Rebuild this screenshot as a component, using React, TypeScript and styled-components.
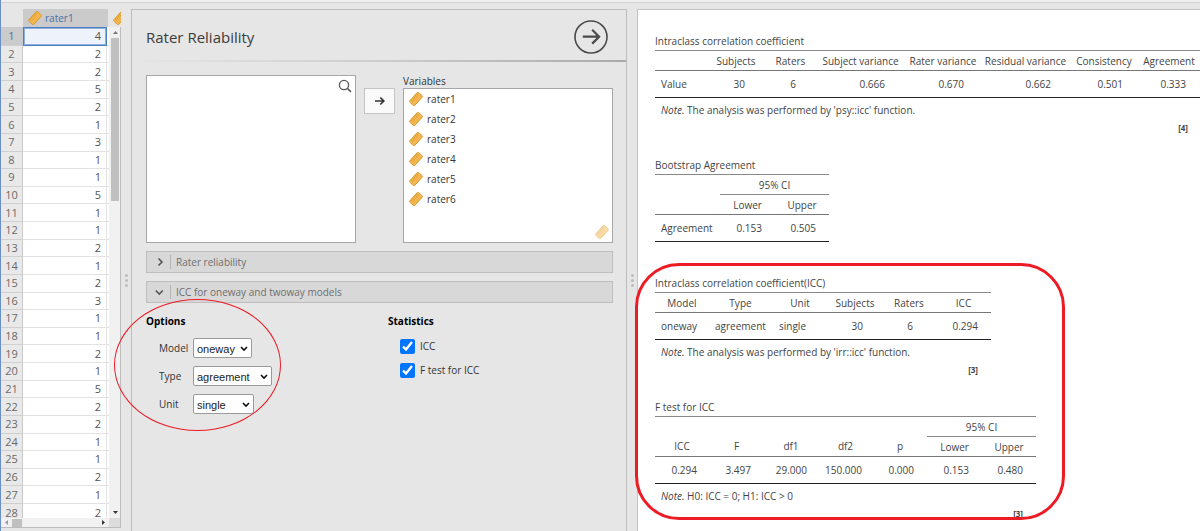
import React from "react";
import styled, { createGlobalStyle } from "styled-components";

const GlobalStyle = createGlobalStyle`
  *, *::before, *::after { box-sizing: border-box; }
  body {
    margin: 0;
    background: #e6e6e6;
    color: #333;
    font-family: "Open Sans", "Noto Sans", sans-serif;
    font-size: 10px;
  }
  button, input, select { margin: 0; font: inherit; color: inherit; }
`;

const Page = styled.div`
  display: flex;
  flex-direction: column;
  height: 100vh;
  overflow: hidden;
  border-left: 1px solid #6a8fc4;
`;

const TopStrip = styled.header`
  flex: none;
  height: 9px;
  border-top: 2px solid #efefef;
  box-shadow: inset 0 1px 0 #d2d2d2;
`;

const Workspace = styled.main`
  flex: 1;
  min-height: 0;
  display: grid;
  grid-template-columns: 120px 10px minmax(0, 496fr) 10px minmax(0, 563fr);
`;

/* ---------- data sheet ---------- */

const Sheet = styled.section`
  display: flex;
  flex-direction: column;
  min-height: 0;
  margin-bottom: 3px;
  border-bottom: 1px solid #bdbdbd;
`;

const SheetHeader = styled.div`
  flex: none;
  display: flex;
  height: 18px;
  padding-left: 22px;
  overflow: hidden;
`;

const ColumnHeader = styled.div<{ $active?: boolean }>`
  flex: none;
  display: flex;
  align-items: center;
  gap: 3px;
  width: 85px;
  padding-left: 5px;
  background: ${(p) => (p.$active ? "#cbcbcb" : "transparent")};
  color: #4a70a8;
`;

const SheetBody = styled.div`
  flex: 1;
  min-height: 0;
  display: grid;
  grid-template-columns: minmax(0, 1fr) 11px;
  grid-template-rows: minmax(0, 1fr) 9px;
  border-right: 1px solid #bdbdbd;
`;

const SheetViewport = styled.div`
  overflow: hidden;
  background: #fff;
`;

const DataTable = styled.table`
  width: 100%;
  height: 495px;
  border-collapse: separate;
  border-spacing: 0;
  table-layout: fixed;
  font-size: 11px;
  line-height: 14px;

  th, td { padding: 0; }
`;

const RowNumber = styled.th<{ $active?: boolean }>`
  width: 22px;
  border-right: 1px solid #c9c9c9;
  border-bottom: 1px solid #d0d0d0;
  background: ${(p) => (p.$active ? "#cbcbcb" : "#e9e9e9")};
  color: ${(p) => (p.$active ? "#4a70a8" : "#6a6a6a")};
  font-weight: 400;
`;

const DataCell = styled.td<{ $active?: boolean }>`
  && { padding-right: 5px; }
  border-right: 1px solid #e2e2e2;
  border-bottom: 1px solid #e2e2e2;
  text-align: right;
  color: #555;
  ${(p) =>
    p.$active &&
    `
    border: 1px solid #4a7fc4;
    box-shadow: inset 0 0 0 1px #8fb0dd;
    background: #edf2fb;
  `}
`;

const NextCell = styled.td`
  width: 2px;
  border-bottom: 1px solid #e2e2e2;
`;

const VerticalBar = styled.div`
  display: flex;
  flex-direction: column;
  align-items: center;
  justify-content: space-between;
  padding: 0 1px 0 2px;
  background: #f1f1f1;
`;

const HorizontalBar = styled.div`
  display: flex;
  align-items: center;
  justify-content: space-between;
  background: #f1f1f1;
`;

const BarStart = styled.div<{ $vertical?: boolean }>`
  display: flex;
  flex-direction: ${(p) => (p.$vertical ? "column" : "row")};
  align-items: center;
`;

const ArrowCell = styled.span`
  display: flex;
  align-items: center;
  justify-content: center;
  width: 11px;
  height: 11px;
`;

const Thumb = styled.span<{ $w: number; $h: number }>`
  width: ${(p) => p.$w}px;
  height: ${(p) => p.$h}px;
  background: #c0c0c0;
`;

const Corner = styled.div`
  background: #dcdcdc;
`;

/* ---------- splitter ---------- */

const Splitter = styled.div`
  display: flex;
  flex-direction: column;
  align-items: center;
  justify-content: center;
  gap: 2px;
  margin-top: 20px;
`;

const Dot = styled.span`
  width: 3px;
  height: 3px;
  border-radius: 50%;
  background: #bcbcbc;
`;

/* ---------- options panel ---------- */

const OptionsPanel = styled.section`
  min-height: 0;
  border: 1px solid #bdbdbd;
  border-bottom: 0;
`;

const PanelHeader = styled.div`
  display: flex;
  align-items: center;
  justify-content: space-between;
  height: 52px;
  padding: 3px 18px 0 14px;
  border-bottom: 2px solid;
  border-image: linear-gradient(to right, #e6e6e6, #cdcdcd 50%, #aaa) 1;
`;

const PanelTitle = styled.h1`
  margin: 0;
  font-size: 15px;
  font-weight: 400;
  line-height: 20px;
  color: #3c3c3c;
`;

const RunButton = styled.button`
  display: flex;
  padding: 0;
  border: 0;
  background: none;
`;

const PanelBody = styled.div`
  padding: 13px 13px 0 14px;
`;

const Picker = styled.div`
  display: grid;
  grid-template-columns: minmax(0, 1fr) 31px minmax(0, 1fr);
  column-gap: 8px;
  height: 168px;
`;

const ListBox = styled.div`
  flex: 1;
  display: flex;
  flex-direction: column;
  justify-content: space-between;
  border: 1px solid #a6a6a6;
  background: #fff;
`;

const SearchRow = styled.div`
  display: flex;
  justify-content: flex-end;
  padding: 3px 3px;
`;

const MoveButton = styled.button`
  display: flex;
  align-items: center;
  justify-content: center;
  height: 26px;
  margin-top: 13px;
  padding: 0;
  border: 1px solid #c4c4c4;
  background: #fafafa;
`;

const Target = styled.div`
  display: flex;
  flex-direction: column;
`;

const TargetLabel = styled.div`
  height: 13px;
  line-height: 12px;
`;

const VariableList = styled.ul`
  margin: 0;
  padding: 0 0 0 5px;
  list-style: none;
`;

const Variable = styled.li`
  display: flex;
  align-items: center;
  gap: 4px;
  height: 20px;
`;

const TypeHint = styled.div`
  display: flex;
  justify-content: flex-end;
  padding: 0 3px 3px 0;
  opacity: 0.5;
`;

const Collapser = styled.button`
  display: flex;
  align-items: center;
  width: 100%;
  height: 22px;
  margin-top: 8px;
  padding: 0 8px;
  border: 1px solid #bebebe;
  background: #d8d8d8;
  color: #6e6e6e;
  text-align: left;
`;

const CollapserIcon = styled.span`
  display: flex;
  width: 16px;
  height: 14px;
  align-items: center;
  border-right: 1px solid #b4b4b4;
  margin-right: 5px;
`;

const Settings = styled.div`
  display: grid;
  grid-template-columns: 242px minmax(0, 1fr);
  margin-top: 10px;
`;

const SettingsGroup = styled.div`
  position: relative;
`;

const GroupTitle = styled.h2`
  margin: 0 0 9px;
  font-size: 10px;
  font-weight: 700;
  line-height: 16px;
  color: #000;
`;

const Field = styled.div`
  display: flex;
  align-items: center;
  height: 20px;
  margin-bottom: 8px;
  padding-left: 13px;
`;

const FieldLabel = styled.label`
  width: 34px;
  white-space: nowrap;
`;

const SelectWrap = styled.span<{ $w: number }>`
  position: relative;
  display: flex;
  width: ${(p) => p.$w}px;
  height: 20px;
`;

const Select = styled.select`
  appearance: none;
  width: 100%;
  padding: 1px 3px 0;
  border: 1px solid #9a9a9a;
  border-radius: 2px;
  background: #fff;
  color: #222;
  font-family: "Liberation Sans", Arial, sans-serif;
  font-size: 11px;
`;

const SelectChevron = styled.svg`
  position: absolute;
  right: 4px;
  top: 8px;
  pointer-events: none;
`;

const Check = styled.label`
  display: flex;
  align-items: center;
  gap: 5px;
  height: 16px;
  margin-bottom: 8px;
  padding-left: 12px;
`;

const CheckInput = styled.input`
  width: 15px;
  height: 15px;
  accent-color: #0075ff;
`;

const EllipseMark = styled.div`
  position: absolute;
  top: -14px;
  left: -32px;
  width: 167px;
  height: 132px;
  border: 1px solid #ed1c24;
  border-radius: 50%;
  pointer-events: none;
`;

/* ---------- results ---------- */

const Results = styled.section`
  padding: 22px 0 0 17px;
  border: 1px solid #c4c4c4;
  border-width: 1px 0 0 1px;
  background: #fff;
  color: #444;
`;

const Result = styled.article`
  width: max-content;
  margin-bottom: 23px;
`;

const MarkedResults = styled.div`
  position: relative;
  width: max-content;
  margin-top: 32px;

  & > article:last-of-type { margin-bottom: 0; }
`;

const FrameMark = styled.div`
  position: absolute;
  inset: -11px -29px -1px -20px;
  border: 3px solid #ed1c24;
  border-radius: 44px;
  pointer-events: none;
`;

const ResultTable = styled.table`
  border-collapse: separate;
  border-spacing: 0;
  table-layout: fixed;
  width: 1px;
  white-space: nowrap;

  caption {
    height: 18px;
    line-height: 18px;
    text-align: left;
  }
`;

const Head = styled.th<{ $line?: boolean }>`
  height: 20px;
  padding: 0;
  border-top: ${(p) => (p.$line ? "1px solid #888" : "0")};
  font-weight: 400;
  text-align: center;
`;

const Value = styled.td<{ $left?: boolean; $inset: number }>`
  height: 28px;
  padding: 0 ${(p) => (p.$left ? 0 : p.$inset)}px 0 ${(p) => (p.$left ? p.$inset : 0)}px;
  border-top: 1px solid #777;
  border-bottom: 1px solid #222;
  text-align: ${(p) => (p.$left ? "left" : "right")};
`;

const Note = styled.p`
  margin: 0;
  padding-left: 6px;
  line-height: 24px;
`;

const Reference = styled.p`
  margin: 0;
  padding-right: 13px;
  font-size: 8px;
  font-weight: 700;
  line-height: 11px;
  text-align: right;
`;

/* ---------- icons ---------- */

const RulerSvg = styled.svg`
  flex: none;
`;

const Ruler = () => (
  <RulerSvg width="14" height="14" viewBox="0 0 14 14" aria-hidden="true">
    <g transform="rotate(-48 7 7)">
      <rect x="0.5" y="3.6" width="13" height="6.8" rx="0.8" fill="#f2b64e" stroke="#de962c" strokeWidth="0.9" />
      <path d="M3 4v2.2M5 4v3M7 4v2.2M9 4v3M11 4v2.2" stroke="#d98f25" strokeWidth="0.7" />
    </g>
  </RulerSvg>
);

const Triangle = ({ d, fill }: { d: string; fill: string }) => (
  <svg width="5" height="5" viewBox="0 0 5 5" aria-hidden="true">
    <path d={d} fill={fill} />
  </svg>
);

/* ---------- data ---------- */

const RATER1 = [4, 2, 2, 5, 2, 1, 3, 1, 1, 5, 1, 1, 2, 1, 2, 3, 1, 1, 2, 1, 5, 2, 2, 1, 1, 2, 1, 2];
const VARIABLES = ["rater1", "rater2", "rater3", "rater4", "rater5", "rater6"];

type Column = { name: string; value: string; width: number; inset: number; left?: boolean };

const ICC_COLUMNS: Column[] = [
  { name: "", value: "Value", width: 51, inset: 6, left: true },
  { name: "Subjects", value: "30", width: 60, inset: 21 },
  { name: "Raters", value: "6", width: 49, inset: 19 },
  { name: "Subject variance", value: "0.666", width: 91, inset: 21 },
  { name: "Rater variance", value: "0.670", width: 74, inset: 16 },
  { name: "Residual variance", value: "0.662", width: 91, inset: 20 },
  { name: "Consistency", value: "0.501", width: 66, inset: 14 },
  { name: "Agreement", value: "0.333", width: 64, inset: 15 },
];

const BOOTSTRAP_COLUMNS: Column[] = [
  { name: "", value: "Agreement", width: 65, inset: 6, left: true },
  { name: "Lower", value: "0.153", width: 55, inset: 13 },
  { name: "Upper", value: "0.505", width: 54, inset: 13 },
];

const MODEL_COLUMNS: Column[] = [
  { name: "Model", value: "oneway", width: 54, inset: 6, left: true },
  { name: "Type", value: "agreement", width: 63, inset: 6, left: true },
  { name: "Unit", value: "single", width: 56, inset: 7, left: true },
  { name: "Subjects", value: "30", width: 54, inset: 19 },
  { name: "Raters", value: "6", width: 54, inset: 23 },
  { name: "ICC", value: "0.294", width: 55, inset: 13 },
];

const F_COLUMNS: Column[] = [
  { name: "ICC", value: "0.294", width: 54, inset: 12 },
  { name: "F", value: "3.497", width: 55, inset: 13 },
  { name: "df1", value: "29.000", width: 54, inset: 11 },
  { name: "df2", value: "150.000", width: 55, inset: 11 },
  { name: "p", value: "0.000", width: 54, inset: 13 },
  { name: "Lower", value: "0.153", width: 55, inset: 13 },
  { name: "Upper", value: "0.480", width: 54, inset: 13 },
];

type ResultBlockProps = {
  title: string;
  columns: Column[];
  interval?: boolean;
  note?: string;
  reference?: string;
};

function ResultBlock({ title, columns, interval, note, reference }: ResultBlockProps) {
  const plain = columns.length - 2;
  return (
    <Result>
      <ResultTable>
        <caption>{title}</caption>
        <colgroup>
          {columns.map((c, i) => (
            <col key={i} width={c.width} />
          ))}
        </colgroup>
        <thead>
          {interval && (
            <tr>
              <Head as="td" $line colSpan={plain} />
              <Head $line colSpan={2} scope="colgroup">95% CI</Head>
            </tr>
          )}
          <tr>
            {columns.map((c, i) => (
              <Head key={i} scope="col" $line={!interval || i >= plain}>{c.name}</Head>
            ))}
          </tr>
        </thead>
        <tbody>
          <tr>
            {columns.map((c, i) => (
              <Value key={i} $left={c.left} $inset={c.inset}>{c.value}</Value>
            ))}
          </tr>
        </tbody>
      </ResultTable>
      {note && <Note><em>Note.</em> {note}</Note>}
      {reference && <Reference>{reference}</Reference>}
    </Result>
  );
}

function Choice({ id, label, value, width }: { id: string; label: string; value: string; width: number }) {
  return (
    <Field>
      <FieldLabel htmlFor={id}>{label}</FieldLabel>
      <SelectWrap $w={width}>
        <Select id={id} defaultValue={value}>
          <option value={value}>{value}</option>
        </Select>
        <SelectChevron width="8" height="6" viewBox="0 0 8 6" aria-hidden="true">
          <path d="M1 1l3 3 3-3" fill="none" stroke="#111" strokeWidth="1.6" />
        </SelectChevron>
      </SelectWrap>
    </Field>
  );
}

const Grip = () => (
  <Splitter>
    <Dot />
    <Dot />
    <Dot />
  </Splitter>
);

export default function App() {
  return (
    <>
      <GlobalStyle />
      <Page>
        <TopStrip />
        <Workspace>
          <Sheet>
            <SheetHeader>
              <ColumnHeader $active><Ruler />rater1</ColumnHeader>
              <ColumnHeader><Ruler /></ColumnHeader>
            </SheetHeader>
            <SheetBody>
              <SheetViewport>
                <DataTable>
                  <tbody>
                    {RATER1.map((v, i) => (
                      <tr key={i}>
                        <RowNumber scope="row" $active={i === 0}>{i + 1}</RowNumber>
                        <DataCell $active={i === 0}>{v}</DataCell>
                        <NextCell />
                      </tr>
                    ))}
                  </tbody>
                </DataTable>
              </SheetViewport>
              <VerticalBar>
                <BarStart $vertical>
                  <ArrowCell><Triangle d="M0 4l2.5-3L5 4z" fill="#777" /></ArrowCell>
                  <Thumb $w={8} $h={163} />
                </BarStart>
                <ArrowCell><Triangle d="M0 1l2.5 3L5 1z" fill="#333" /></ArrowCell>
              </VerticalBar>
              <HorizontalBar>
                <BarStart>
                  <ArrowCell><Triangle d="M4 0L1 2.5 4 5z" fill="#999" /></ArrowCell>
                  <Thumb $w={10} $h={8} />
                </BarStart>
                <ArrowCell><Triangle d="M1 0l3 2.5L1 5z" fill="#333" /></ArrowCell>
              </HorizontalBar>
              <Corner />
            </SheetBody>
          </Sheet>

          <Grip />

          <OptionsPanel>
            <PanelHeader>
              <PanelTitle>Rater Reliability</PanelTitle>
              <RunButton aria-label="Hide options">
                <svg width="34" height="34" viewBox="0 0 34 34" fill="none" stroke="#4a4a4a" aria-hidden="true">
                  <circle cx="17" cy="17" r="16" strokeWidth="1.6" />
                  <path d="M8.8 16.7H25M18.2 9.8l6.9 6.9-6.9 6.9" strokeWidth="2.2" />
                </svg>
              </RunButton>
            </PanelHeader>
            <PanelBody>
              <Picker>
                <ListBox>
                  <SearchRow>
                    <svg width="14" height="14" viewBox="0 0 14 14" fill="none" stroke="#555" aria-hidden="true">
                      <circle cx="6" cy="6" r="4.6" strokeWidth="1.3" />
                      <path d="M9.3 9.3l3.6 3.6" strokeWidth="1.6" />
                    </svg>
                  </SearchRow>
                </ListBox>
                <MoveButton aria-label="Assign variable">
                  <svg width="10" height="10" viewBox="0 0 10 10" fill="none" stroke="#333" strokeWidth="1.7" aria-hidden="true">
                    <path d="M0 5h9M5.3 1.5L8.8 5 5.3 8.5" />
                  </svg>
                </MoveButton>
                <Target>
                  <TargetLabel>Variables</TargetLabel>
                  <ListBox>
                    <VariableList>
                      {VARIABLES.map((name) => (
                        <Variable key={name}><Ruler />{name}</Variable>
                      ))}
                    </VariableList>
                    <TypeHint><Ruler /></TypeHint>
                  </ListBox>
                </Target>
              </Picker>

              <Collapser aria-expanded="false">
                <CollapserIcon>
                  <svg width="9" height="10" viewBox="0 0 9 10" fill="none" stroke="#555" strokeWidth="1.6" aria-hidden="true">
                    <path d="M3.5 1.5L7 5 3.5 8.5" />
                  </svg>
                </CollapserIcon>
                Rater reliability
              </Collapser>
              <Collapser aria-expanded="true">
                <CollapserIcon>
                  <svg width="9" height="10" viewBox="0 0 9 10" fill="none" stroke="#555" strokeWidth="1.6" aria-hidden="true">
                    <path d="M0.8 3.5L4.3 7l3.5-3.5" />
                  </svg>
                </CollapserIcon>
                ICC for oneway and twoway models
              </Collapser>

              <Settings>
                <SettingsGroup>
                  <GroupTitle>Options</GroupTitle>
                  <Choice id="model" label="Model" value="oneway" width={59} />
                  <Choice id="type" label="Type" value="agreement" width={79} />
                  <Choice id="unit" label="Unit" value="single" width={61} />
                  <EllipseMark />
                </SettingsGroup>
                <SettingsGroup>
                  <GroupTitle>Statistics</GroupTitle>
                  <Check><CheckInput type="checkbox" defaultChecked />ICC</Check>
                  <Check><CheckInput type="checkbox" defaultChecked />F test for ICC</Check>
                </SettingsGroup>
              </Settings>
            </PanelBody>
          </OptionsPanel>

          <Grip />

          <Results>
            <ResultBlock
              title="Intraclass correlation coefficient"
              columns={ICC_COLUMNS}
              note="The analysis was performed by 'psy::icc' function."
              reference="[4]"
            />
            <ResultBlock title="Bootstrap Agreement" columns={BOOTSTRAP_COLUMNS} interval />
            <MarkedResults>
              <ResultBlock
                title="Intraclass correlation coefficient(ICC)"
                columns={MODEL_COLUMNS}
                note="The analysis was performed by 'irr::icc' function."
                reference="[3]"
              />
              <ResultBlock
                title="F test for ICC"
                columns={F_COLUMNS}
                interval
                note="H0: ICC = 0; H1: ICC > 0"
                reference="[3]"
              />
              <FrameMark />
            </MarkedResults>
          </Results>
        </Workspace>
      </Page>
    </>
  );
}
